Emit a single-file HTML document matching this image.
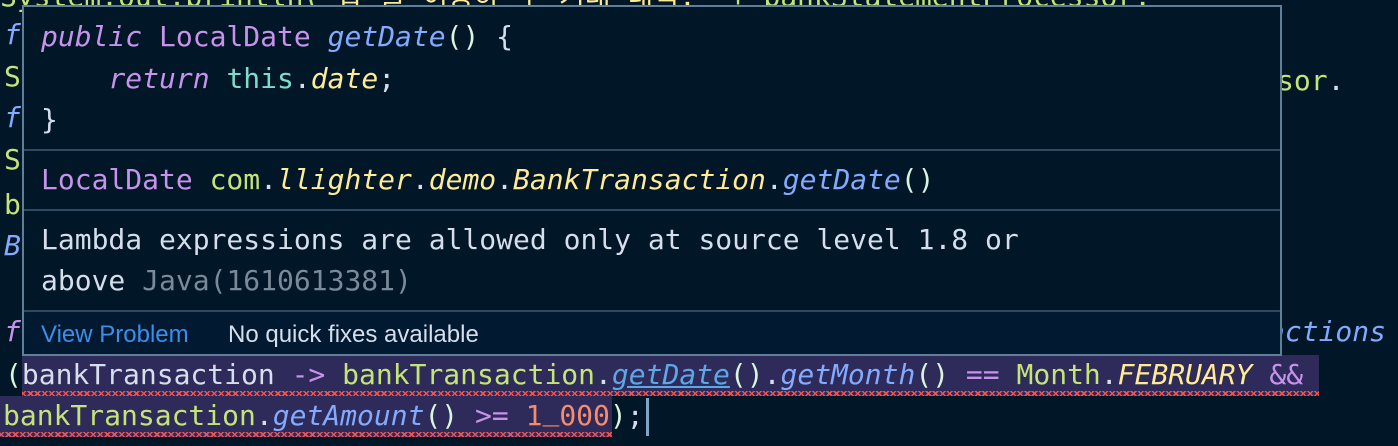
<!DOCTYPE html>
<html><head><meta charset="utf-8"><style>
body{margin:0;width:1398px;height:446px;overflow:hidden;background:#011627;position:relative;font-family:"DejaVu Sans Mono","Liberation Mono",monospace;font-size:28px;color:#d6deeb}
.l{position:absolute;white-space:pre;line-height:41px;height:41px;z-index:2}
.i{font-style:italic}
.pu{color:#c792ea}.bl{color:#82aaff}.gr{color:#c5e478}.ye{color:#ffeb95}.cy{color:#7fdbca}.wh{color:#d6deeb}.or{color:#f78c6c}.gy{color:#7b8a99}.pa{color:#d9f5dd}
#pop{position:absolute;left:22px;top:5px;width:1260px;height:351px;border:2px solid #5f7e97;background:#011627;box-sizing:border-box;z-index:5}
.hr{position:absolute;left:0;right:0;height:2px;background:#2f4a5e}
.sq{position:absolute;height:5px;z-index:1;background:repeating-linear-gradient(135deg,transparent 0 2px,#ef5350 2px 3.5px,transparent 3.5px 5px),repeating-linear-gradient(45deg,transparent 0 2px,#ef5350 2px 3.5px,transparent 3.5px 5px)}
</style></head><body>
<div class="l gr" style="left:0;top:-24px">System.out.println(<span class="ye">"합 을 이용하 수 거래 내역:"</span> + bankStatementProcessor.</div>
<div class="l bl i" style="left:4px;top:14px">f</div>
<div class="l gr" style="left:4px;top:56px">S</div>
<div class="l gr" style="left:1277px;top:60px">sor<span class="wh">.</span></div>
<div class="l bl i" style="left:4px;top:97px">f</div>
<div class="l gr" style="left:4px;top:139px">S</div>
<div class="l gr" style="left:4px;top:184px">b</div>
<div class="l bl i" style="left:4px;top:225px">B</div>
<div class="l pu i" style="left:4px;top:311px">f</div>
<div class="l bl i" style="left:1268px;top:311px">actions</div>
<div style="position:absolute;left:22px;top:355px;width:1297px;height:41px;background:#2e2a5a"></div>
<div style="position:absolute;left:0;top:396px;width:612px;height:41px;background:#2e2a5a"></div>
<div class="sq" style="left:22px;top:391px;width:1297px"></div>
<div class="sq" style="left:0;top:432px;width:612px"></div>
<div class="l" style="left:5px;top:354px"><span class="pa">(</span>bankTransaction <span class="pu">-&gt;</span> <span class="gr">bankTransaction</span>.<span class="i" style="color:#5ca7e4;text-decoration:underline">getDate</span><span class="pa">()</span>.<span class="bl i">getMonth</span><span class="pa">()</span> <span class="pu">==</span> <span class="gr">Month</span>.<span class="ye i">FEBRUARY</span> <span class="pu">&amp;&amp;</span></div>
<div class="l" style="left:3px;top:395px"><span class="gr">bankTransaction</span>.<span class="bl i">getAmount</span><span class="pa">()</span> <span class="pu">&gt;=</span> <span class="or">1<span style="position:relative;top:-5px">_</span>000</span><span class="pa">)</span>;</div>
<div style="position:absolute;left:646px;top:398px;width:3px;height:38px;background:#80a4c2"></div>
<div id="pop">
<div class="l" style="left:17px;top:9px"><span class="pu i">public</span> <span class="pu">LocalDate</span> <span class="bl i">getDate</span><span class="pa">()</span> {</div>
<div class="l" style="left:17px;top:51px">    <span class="pu i">return</span> <span class="cy">this</span>.<span class="ye i">date</span>;</div>
<div class="l" style="left:17px;top:92px">}</div>
<div class="hr" style="top:142px"></div>
<div class="l" style="left:17px;top:152px"><span class="pu">LocalDate</span> <span class="gr">com</span>.<span class="ye i">llighter</span>.<span class="ye i">demo</span>.<span class="ye i">BankTransaction</span>.<span class="bl i">getDate</span><span class="pa">()</span></div>
<div class="hr" style="top:202px"></div>
<div class="l" style="left:17px;top:212px">Lambda expressions are allowed only at source level 1.8 or</div>
<div class="l" style="left:17px;top:253px">above <span class="gy">Java(1610613381)</span></div>
<div class="hr" style="top:303px"></div>
<div style="position:absolute;left:0;right:0;top:305px;bottom:0;background:#011a31"></div>
<div class="l" style="left:17px;top:307px;font-family:'Liberation Sans',sans-serif;font-size:24px;color:#3b8eea">View Problem</div>
<div class="l" style="left:204px;top:307px;font-family:'Liberation Sans',sans-serif;font-size:24px;color:#d6deeb">No quick fixes available</div>
</div>
</body></html>
